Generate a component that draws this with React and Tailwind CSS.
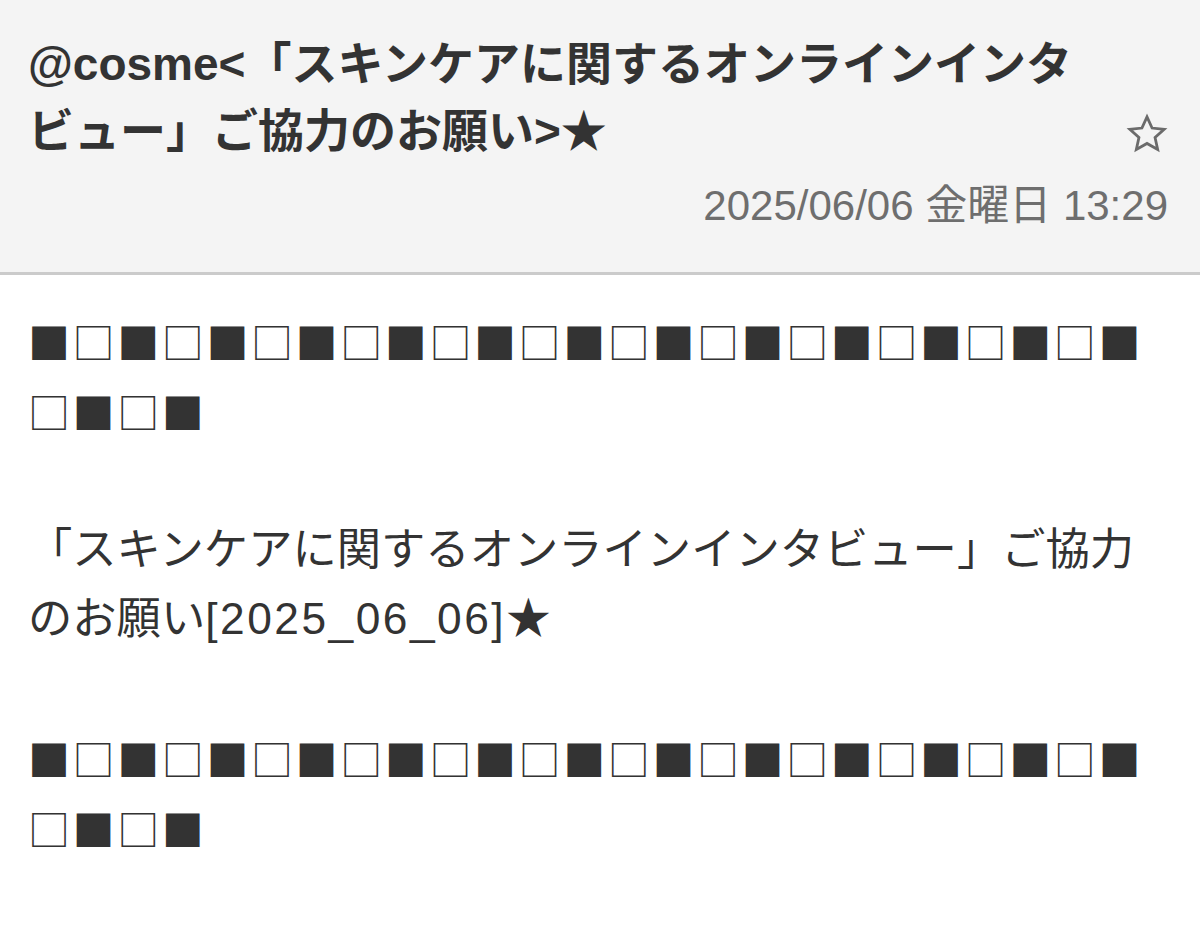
import React from "react";

const FONT = "font-['Liberation_Sans','Noto_Sans_CJK_JP',sans-serif]";

function Squares() {
  const s = "■□■□■□■□■□■□■□■□■□■□■□■□■□■□■";
  return (
    <p className="font-['Noto_Sans_CJK_JP',sans-serif] text-[42px] tracking-[2.6px] break-all">{s}</p>
  );
}

function OutlineStar() {
  return (
    <svg width="42" height="42" viewBox="0 0 24 24" fill="none" aria-hidden="true">
      <polygon
        points="12,2.2 14.9,8.6 21.8,9.3 16.6,14 18.1,20.9 12,17.4 5.9,20.9 7.4,14 2.2,9.3 9.1,8.6"
        stroke="#6b6b6b"
        strokeWidth="1.6"
        strokeLinejoin="miter"
      />
    </svg>
  );
}

export default function App() {
  return (
    <div className={`w-[1200px] h-[925px] bg-white overflow-hidden text-[#333333] ${FONT}`}>
      <header className="h-[275px] bg-[#f4f4f4] border-b-[3px] border-[#cbcbcb] pl-[28px] pr-[32px] pt-[31px]">
        <div className="flex items-end">
          <h1 className="flex-1 text-[46px] leading-[67px] font-bold">
            @cosme&lt;「スキンケアに関するオンラインインタビュー」ご協力のお願い&gt;★
          </h1>
          <div className="ml-[20px] mb-[10px] flex items-center justify-center w-[42px] h-[42px]">
            <OutlineStar />
          </div>
        </div>
        <div className="mt-[16px] text-right text-[42px] leading-[50px] text-[#6e6e6e]">
          2025/06/06 金曜日 13:29
        </div>
      </header>
      <main className="px-[28px] pt-[31px] text-[44.3px] leading-[69.5px]">
        <Squares />
        <p>&nbsp;</p>
        <p>
          「スキンケアに関するオンラインインタビュー」ご協力のお願い<span className="tracking-[2.5px]">[2025_06_06]</span>★
        </p>
        <p>&nbsp;</p>
        <Squares />
      </main>
    </div>
  );
}
